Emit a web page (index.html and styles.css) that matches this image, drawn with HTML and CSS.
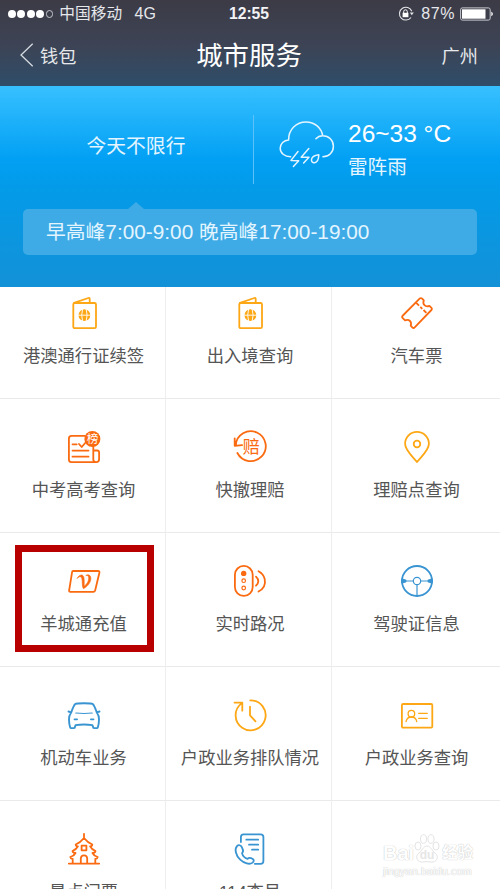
FILE: index.html
```html
<!DOCTYPE html>
<html lang="zh-CN">
<head>
<meta charset="utf-8">
<title>城市服务</title>
<link rel="stylesheet" href="styles.css">
</head>
<body>
<div class="phone">
  <header class="top">
    <div class="status">
      <div class="status-left">
        <span class="signal"><i></i><i></i><i></i><i></i><i class="empty"></i></span>
        <span class="carrier">中国移动</span>
        <span class="network">4G</span>
      </div>
      <span class="time">12:55</span>
      <div class="status-right">
        <svg class="lock" width="16" height="16" viewBox="0 0 16 16"><path d="M13.8 5.2A6.4 6.4 0 1 0 13 11.5" fill="none" stroke="#e6e7ea" stroke-width="1.1"/><path d="M11.8 6.5h4l-2 2.8z" fill="#e6e7ea"/><rect x="4.6" y="6.8" width="5.8" height="4.4" fill="#fff"/><path d="M5.7 7V5.6a1.8 1.8 0 0 1 3.6 0V7" fill="none" stroke="#fff" stroke-width="1"/></svg>
        <span class="percent">87%</span>
        <svg class="battery" width="33" height="14" viewBox="0 0 33 14"><rect x=".6" y=".9" width="29.6" height="12.2" rx="1.8" fill="none" stroke="#c9cbd0"/><rect x="2" y="2.3" width="23.5" height="9.4" fill="#fff"/><path d="M31.3 4.8c2 .7 2 3.7 0 4.4z" fill="#fff"/></svg>
      </div>
    </div>
    <nav class="nav">
      <div class="back"><svg width="14" height="24" viewBox="0 0 14 24"><path d="M12.7.7 1 12l11.7 11.2" fill="none" stroke="#d5dae0" stroke-width="1.3"/></svg><span>钱包</span></div>
      <h1>城市服务</h1>
      <span class="city">广州</span>
    </nav>
  </header>

  <section class="hero">
    <div class="summary">
      <div class="limit">今天不限行</div>
      <div class="weather">
        <svg width="58" height="52" viewBox="0 0 58 52" fill="none" stroke="#e4f5ff" stroke-width="1.5" stroke-linecap="round" stroke-linejoin="round"><path d="M12.6 38.7C6.5 38.7 2.2 35 2.2 30.3c0-4.600 3.700-8 8.400-8.400C10.500 11.500 18.300 3.900 28 3.900c8.800 0 15.400 6 16.700 13.800M37.900 20.800c1.700-2 4.400-3.100 6.800-3.100 6.200 0 10.700 4.500 10.700 10.500s-4.500 10.500-10.500 10.500"/><path d="M20 33.500 13 42.400l7.700.300-5.300 5.800M30.800 30.500l-7.600 8.800H31l-5.400 5.700M40.800 36.800c-4.300.6-7 2.400-7.300 4.700-.3 2.200 1.200 3.600 3.200 3.200 2.900-.6 4-4 4.100-7.900z"/></svg>
        <div class="reading"><div class="temp">26~33 °C</div><div class="sky">雷阵雨</div></div>
      </div>
    </div>
    <div class="peak">早高峰<span class="hours">7:00-9:00 </span>晚高峰<span class="hours">17:00-19:00</span></div>
  </section>

  <main class="services">
    <div class="grid">
      <div class="cell amber"><svg class="icon" viewBox="0 0 36 36"><rect x="7.300" y="8" width="22.700" height="25.200" rx="1.500"/><path d="M8 7.800 22.400 3q1.300-.4 1.300 1v4"/><g class="solid" stroke="none"><circle cx="18.400" cy="20.200" r="5.900"/></g><g class="cut"><path d="M12 20.200h13M16.600 14q-1.900 6.200 0 12.400M20.200 14q1.900 6.200 0 12.400"/></g></svg><span>港澳通行证续签</span></div>
      <div class="cell amber"><svg class="icon" viewBox="0 0 36 36"><rect x="7.300" y="8" width="22.700" height="25.200" rx="1.500"/><path d="M8 7.800 22.400 3q1.300-.4 1.300 1v4"/><g class="solid" stroke="none"><circle cx="18.400" cy="20.200" r="5.900"/></g><g class="cut"><path d="M12 20.200h13M16.600 14q-1.900 6.200 0 12.400M20.200 14q1.900 6.200 0 12.400"/></g></svg><span>出入境查询</span></div>
      <div class="cell orange"><svg class="icon" viewBox="0 0 36 36"><path d="M3.400 21 20.600 3.700q1.300-1.200 2.600 0l1.600 1.700c-.8 2-.4 3.800.7 4.800 1.200 1.200 3 1.400 4.900.6l2.100 2q1 1.100-.1 2.200L15.700 32.400q-1.200 1.200-2.400 0l-1.600-1.800c.7-1.900.4-3.500-.7-4.600-1.200-1.200-3-1.500-4.900-.7l-2.600-2.500q-.900-.9-.1-1.800z"/><path d="m17.200 7.900 11 10.700" stroke-dasharray="4 1.700 2.800 1.700" stroke-linecap="butt"/></svg><span>汽车票</span></div>

      <div class="cell orange"><svg class="icon" viewBox="0 0 36 36"><path d="M19 6.900H5.500q-2.600 0-2.600 2.600v21q0 2.600 2.600 2.600h24.700q2.900 0 2.900-2.900v-6.700q0-2-2-2h-3.800v9q0 2.500 2.700 2.600M27.300 21.500v-4M6.500 21.600h16M6.500 27.700h16M6.500 15.300h4.200M13 15l2.700 3 4.800-5.500"/><g class="solid" stroke="none"><circle cx="26.400" cy="10" r="8"/></g><text class="badge-text" x="26.400" y="14.200">榜</text></svg><span>中考高考查询</span></div>
      <div class="cell orange"><svg class="icon" viewBox="0 0 36 36"><path d="M3.800 16A15 15 0 1 1 5.400 24M2.700 9.500v7.300l7.400-.7"/><text class="claim-text" x="19.300" y="24">赔</text></svg><span>快撤理赔</span></div>
      <div class="cell amber"><svg class="icon" viewBox="0 0 36 36"><path d="M18 33C13 26.700 6.100 21.300 6.100 14.800a11.900 11.900 0 0 1 23.800 0C29.900 21.300 23 26.700 18 33z"/><circle cx="18" cy="15" r="3.300"/></svg><span>理赔点查询</span></div>

      <div class="cell orange marked"><svg class="icon" viewBox="0 0 36 36"><path d="M7 8h25q1.800 0 1.400 1.700l-4.200 17.600q-.4 1.500-1.900 1.500H4.500q-1.800 0-1.300-1.700L6 9.600Q6.200 8 7 8z"/><path class="solid" d="M11.200 15.200c1.500-2.600 3.800-3.800 5.300-3 2.200 1.200 1.700 7 1.700 11 3.500-2.500 5.100-6.800 4.300-9.500-.6-1.300-1.500-1.500-2.700-1.100 1.500-1.400 3.800-1 4.700 1 1.400 3.400-1.500 9.500-7.100 12.100-1.800-2.700-.6-8.500-1.800-11-1-1.600-2.800-.9-4.400.5z" stroke-width=".6"/></svg><span>羊城通充值</span></div>
      <div class="cell orange"><svg class="icon" viewBox="0 0 36 36"><rect x="2.900" y="2.900" width="17.800" height="30" rx="8.900"/><circle class="solid" cx="11.700" cy="10.400" r="1.800"/><circle cx="11.700" cy="17.700" r="1.800" stroke-width="1.200"/><circle cx="11.700" cy="25" r="1.800" stroke-width="1.200"/><path d="M24 13.700q4.600 4.500 0 9M26.500 8.300q5 2.700 6.200 7.700 1.700 8.500-6.200 12.500"/></svg><span>实时路况</span></div>
      <div class="cell blue"><svg class="icon" viewBox="0 0 36 36"><circle cx="18" cy="18" r="15"/><circle cx="18" cy="18" r="3.700" stroke-width="1.200"/><path d="M3 18h11.300M21.700 18H33M18 21.700V33" stroke-width="1.200"/><path class="solid" d="M3 16.500 6.500 17.300v1.400L3 19.500zM33 16.500l-3.500.8v1.400l3.500.8z"/></svg><span>驾驶证信息</span></div>

      <div class="cell blue"><svg class="icon" viewBox="0 0 36 36"><path d="M9.300 7q1-.8 8.700-.8t8.700.8q1.600 1.300 4.100 8.500 2.300 3 2.200 7 0 4.500-1.300 8.300-2 .7-4.300 0l-1-2.700q-8.400-1.300-16.800 0l-1 2.700q-2.300.7-4.300 0Q3 27 3 22.500q-.1-4 2.200-7Q7.700 8.300 9.300 7zM2.500 14.500l2.500.8M33.500 14.500l-2.500.8" stroke-width="1.900"/><path d="M9.700 16q8.300.9 16.600 0" stroke-width="1.100"/><path d="M8.500 22.300h2.600M24.900 22.300h2.600"/></svg><span>机动车业务</span></div>
      <div class="cell amber"><svg class="icon" viewBox="0 0 36 36"><path d="M18.200 3.300A15 15 0 1 1 9.500 6.400M2.500 5.600h7.800v8.100M18 9.700v8.600l5.500 6"/></svg><span>户政业务排队情况</span></div>
      <div class="cell amber"><svg class="icon" viewBox="0 0 36 36"><rect x="2.900" y="7" width="30.400" height="23.700" rx="1.200"/><g stroke-width="1.300"><circle cx="12.400" cy="16.700" r="3.300"/><path d="M7 24.700q1-4.700 5.400-4.700t5.400 4.700M19.700 16.300h8.600M19.700 21.300h8.600"/></g></svg><span>户政业务查询</span></div>

      <div class="cell orange"><svg class="icon" viewBox="0 0 36 36"><path d="M18 2.800v4M18 7q-3.500 4.500-8.300 6.500 0 1.700 2.200 1.900Q10.500 18.300 6.500 20q.5 2 3 2-1.300 2.800-5.200 4 .2 1.700 2.400 2v4.500M18 7q3.500 4.500 8.300 6.500 0 1.700-2.200 1.900 1.400 2.900 5.400 4.600-.5 2-3 2 1.300 2.800 5.200 4-.2 1.700-2.400 2v4.500M2.800 32.600h30.400M14.800 32.500v-5q.2-3.200 3.200-3.200t3.200 3.200v5"/><rect x="15.600" y="14.700" width="4.800" height="4.600"/></svg><span>景点门票</span></div>
      <div class="cell blue"><svg class="icon" viewBox="0 0 36 36"><path d="M8.900 11V6q0-2.700 2.700-2.700h17q2.800 0 2.800 2.700v24q0 2.800-2.800 2.800h-5.800M14.300 8.700h11.900M17 13.700h9.200M20 18.700h6.200"/><path d="M5.200 14.800c-3 3-1.600 9.500 3 13.800 4 3.800 9.500 5.400 12.400 3 1.500-1.300 1.500-2.600.2-3.500-2.500-1.700-3.700-2-5.200-.3-2.500-.7-5-3.300-5.600-5.700 1.800-1.500 1.300-2.900-.2-6-1-2-3-2.500-4.600-1.300z"/></svg><span>114查号</span></div>
      <div class="cell"></div>
    </div>
  </main>

  <div class="watermark">
    <div class="brand"><b>Bai</b><svg width="26" height="30" viewBox="0 0 26 30"><g fill="#fff" stroke="#e4e4e4"><ellipse cx="4" cy="12" rx="3" ry="4"/><ellipse cx="9.500" cy="5" rx="3" ry="4.300"/><ellipse cx="17" cy="5" rx="3" ry="4.300"/><ellipse cx="22" cy="12" rx="3" ry="4"/><path d="M13 12c-4 0-5 5-8 7-5 4-1 10 4 9q4-.7 8 0c5 1 9-5 4-9-3-2-4-7-8-7z"/></g><text x="13" y="25">du</text></svg><b class="cn">经验</b></div>
    <div class="domain">jingyan.baidu.com</div>
  </div>
</div>
</body>
</html>
```
FILE: styles.css
```css
*, *::before, *::after { box-sizing: border-box; }
body { margin: 0; background: #fff; font-family: "Liberation Sans", "Noto Sans CJK SC", sans-serif; }
.phone { position: relative; width: 500px; height: 889px; overflow: hidden; display: flex; flex-direction: column; }

.top { height: 86px; flex: none; background: linear-gradient(#3c3b46, #3d4354 50%, #2f4d69); color: #e6e8eb; }
.status { height: 28px; display: grid; grid-template-columns: 1fr auto 1fr; align-items: center; padding: 0 7px 0 8px; }
.status-left, .status-right { display: flex; align-items: center; }
.status-right { justify-content: flex-end; }
.signal { display: flex; gap: 1.600px; }
.signal i { width: 7.800px; height: 7.800px; border-radius: 50%; background: #fff; }
.signal .empty { background: none; border: 1px solid #c5c7cc; }
.carrier { margin-left: 6px; font-size: 15.700px; line-height: 28px; }
.network { margin-left: 12.500px; font-size: 16px; }
.time { margin-right: 3px; font-size: 15.700px; font-weight: 700; color: #f3f3f5; }
.percent { margin: 0 5px 0 7px; font-size: 16px; letter-spacing: .6px; }
.nav { height: 58px; display: grid; grid-template-columns: 1fr auto 1fr; align-items: center; padding: 0 22px 4px 20px; }
.back { display: flex; align-items: center; gap: 6px; font-size: 18.200px; }
.nav h1 { margin: 0; padding-top: 1px; font-size: 26.400px; line-height: 40px; font-weight: 400; color: #fff; }
.city { justify-self: end; font-size: 18.200px; }

.hero { height: 201px; flex: none; background: linear-gradient(#37c0ff, #02a0f4 36%, #039be9 50%, #1391d7); padding: 29px 23px 0; color: #e4f5ff; }
.summary { display: grid; grid-template-columns: 230px 1fr; height: 69px; }
.limit { display: flex; align-items: center; padding: 0 0 10px 63.500px; font-size: 19.800px; }
.weather { display: flex; align-items: flex-start; border-left: 1px solid #5bc1f8; padding: 3px 0 0 24px; gap: 12px; }
.reading { display: flex; flex-direction: column; }
.temp { font-size: 24.500px; line-height: 32px; color: #fff; }
.sky { font-size: 19.600px; line-height: 32px; margin-top: 1px; }
.peak { position: relative; height: 46px; margin-top: 25px; padding-left: 23px; border-radius: 5px; background: #3eabe6; font-size: 19.800px; line-height: 46px; white-space: nowrap; }
.hours { font-size: 20.800px; }
.peak::before { content: ""; position: absolute; left: 105px; top: -7px; border: 8px solid transparent; border-top: 0; border-bottom: 7px solid #3eabe6; }

.services { height: 602px; overflow: hidden; }
.grid { display: grid; grid-template-columns: 166px 166px 1fr; grid-auto-rows: 134px; margin-top: -22px; }
.cell { position: relative; display: flex; flex-direction: column; align-items: center; gap: 12.500px; padding: 30px 0 0 2px; border-right: 1px solid #eee; border-bottom: 1px solid #eaeaea; font-size: 17.300px; line-height: 24px; color: #555; white-space: nowrap; }
.cell:nth-child(3n) { border-right: 0; padding-left: 1px; }
.cell:nth-child(3n + 2) { padding-left: 3px; }
.icon { width: 36px; height: 36px; flex: none; fill: none; stroke: currentColor; stroke-width: 1.800; stroke-linecap: round; stroke-linejoin: round; }
.cell span { color: #555; }
.amber { color: #fda715; }
.orange { color: #fa6a10; }
.blue { color: #3994d2; }
.solid { fill: currentColor; }
.cut { stroke: #fff; stroke-width: .9; }
.icon text { stroke: none; text-anchor: middle; font-family: "Noto Sans CJK SC", sans-serif; }
.badge-text { fill: #fff; font-size: 11.500px; font-weight: 400; }
.claim-text { fill: currentColor; font-size: 17px; font-weight: 400; }
.marked::after { content: ""; position: absolute; left: 15px; top: 12px; width: 138.500px; height: 107px; border: 7px solid #b90000; }

.watermark { position: absolute; left: 383px; top: 834px; width: 92px; color: #fff; text-shadow: 0 0 1px #c8c8c8, 0 0 1px #d0d0d0; }
.brand { display: flex; align-items: flex-end; height: 31px; }
.brand b { font-size: 20px; line-height: 24px; }
.brand svg { margin: 0 2px 1px 0; flex: none; }
.brand text { font-size: 12px; font-weight: 700; text-anchor: middle; fill: #e6e6e6; text-shadow: none; }
.brand .cn { font-size: 15.500px; white-space: nowrap; }
.domain { font-size: 11px; line-height: 13px; white-space: nowrap; }
```
